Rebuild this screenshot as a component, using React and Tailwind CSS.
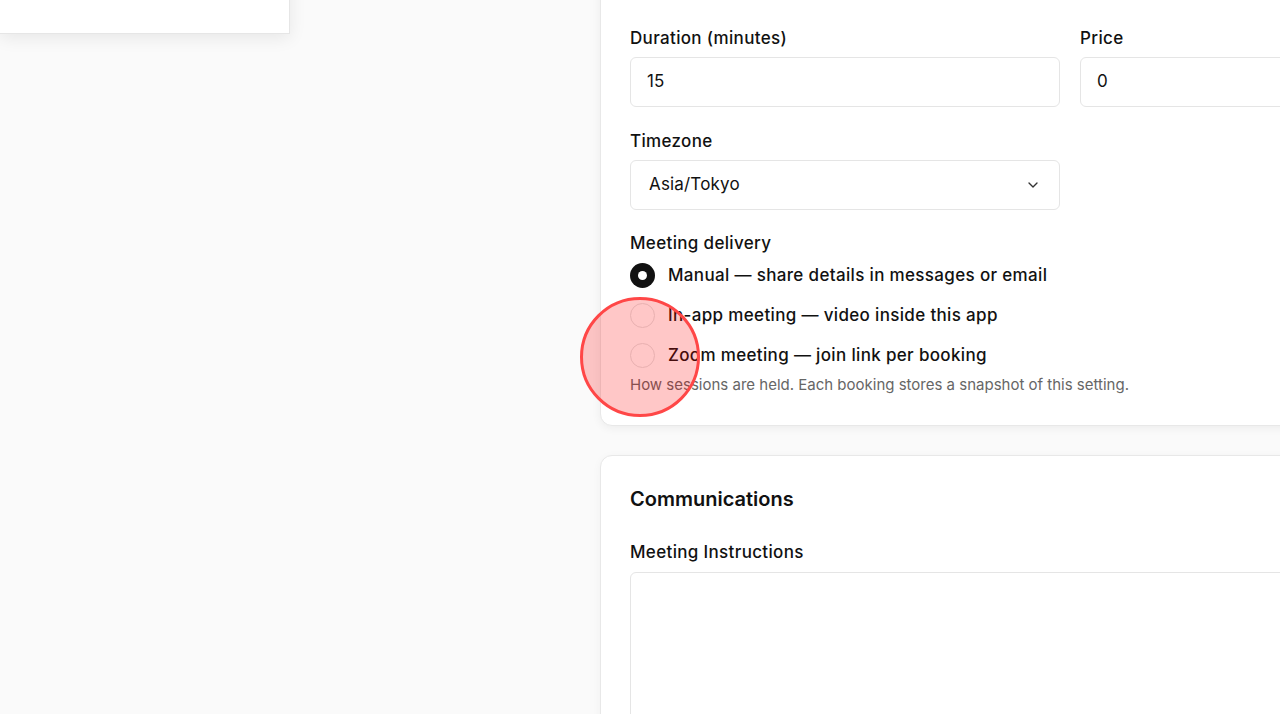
import React from "react";

function Radio({ checked, label }) {
  return (
    <label className="flex items-center gap-[13px] h-6">
      {checked ? (
        <span className="w-[25px] h-[25px] rounded-full bg-[#111111] flex items-center justify-center shrink-0">
          <span className="w-[9px] h-[9px] rounded-full bg-white" />
        </span>
      ) : (
        <span className="w-[25px] h-[25px] rounded-full border-[1.5px] border-[#e2e2e2] bg-white shrink-0" />
      )}
      <span className="text-[17px] font-medium text-[#111111] leading-6 tracking-[0.02em]">{label}</span>
    </label>
  );
}

export default function App() {
  return (
    <div
      className="relative w-[1280px] h-[714px] overflow-hidden bg-[#fafafa]"
      style={{ fontFamily: "Inter, 'Noto Sans', sans-serif" }}
    >
      <div className="flex items-start gap-[310px] -mt-[40px]">
        <div className="w-[290px] h-[74px] shrink-0 bg-white border-r border-b border-[#e6e6e6] shadow-[0_4px_16px_rgba(0,0,0,0.08)]" />

        <div className="flex flex-col gap-[29px] w-[940px] shrink-0">
          <div className="bg-white rounded-xl border border-[#e8e8e8] shadow-[0_2px_10px_rgba(0,0,0,0.06)] px-[29px] pt-[65px] pb-[30px]">
            <div className="grid grid-cols-2 gap-x-5">
              <div className="flex flex-col gap-[7px]">
                <span className="text-[17px] font-medium text-[#111111] leading-6 tracking-[0.02em]">Duration (minutes)</span>
                <div className="h-[50px] rounded-md border border-[#e5e5e5] bg-white flex items-center px-4 text-[17px] text-[#111111]">
                  15
                </div>
              </div>
              <div className="flex flex-col gap-[7px]">
                <span className="text-[17px] font-medium text-[#111111] leading-6 tracking-[0.02em]">Price</span>
                <div className="h-[50px] rounded-md border border-[#e5e5e5] bg-white flex items-center px-4 text-[17px] text-[#111111]">
                  0
                </div>
              </div>
            </div>

            <div className="grid grid-cols-2 gap-x-5 mt-[22px]">
              <div className="flex flex-col gap-[7px]">
                <span className="text-[17px] font-medium text-[#111111] leading-6 tracking-[0.02em]">Timezone</span>
                <div className="h-[50px] rounded-md border border-[#e5e5e5] bg-white flex items-center justify-between pl-[18px] pr-[18px] text-[17px] text-[#111111] tracking-[0.01em]">
                  <span>Asia/Tokyo</span>
                  <svg width="16" height="16" viewBox="0 0 24 24" fill="none" stroke="#333" strokeWidth="2" strokeLinecap="round" strokeLinejoin="round">
                    <path d="M6 9l6 6 6-6" />
                  </svg>
                </div>
              </div>
            </div>

            <div className="mt-[21px] flex flex-col">
              <span className="text-[17px] font-medium text-[#111111] leading-6 tracking-[0.02em]">Meeting delivery</span>
              <div className="mt-2 flex flex-col gap-4">
                <Radio checked label="Manual — share details in messages or email" />
                <Radio label="In-app meeting — video inside this app" />
                <Radio label="Zoom meeting — join link per booking" />
              </div>
              <p className="mt-2 text-[15px] leading-5 text-[#666666]">
                How sessions are held. Each booking stores a snapshot of this setting.
              </p>
            </div>
          </div>

          <div className="bg-white rounded-xl border border-[#e8e8e8] shadow-[0_2px_10px_rgba(0,0,0,0.04)] px-[29px] pt-[29px] pb-[30px]">
            <h2 className="text-[20px] font-semibold text-[#111111] leading-7">Communications</h2>
            <div className="mt-[27px] flex flex-col gap-2">
              <span className="text-[17px] font-medium text-[#111111] leading-6 tracking-[0.02em]">Meeting Instructions</span>
              <div className="h-[200px] rounded-md border border-[#e5e5e5] bg-white" />
            </div>
          </div>
        </div>
      </div>

      <div className="absolute left-[580px] top-[297px] w-[120px] h-[120px] rounded-full bg-[rgba(255,0,0,0.22)] border-[3px] border-[#ff4747] pointer-events-none" />
    </div>
  );
}
